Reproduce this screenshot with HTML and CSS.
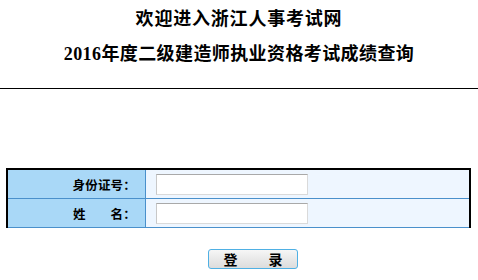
FILE: index.html
```html
<!DOCTYPE html>
<html lang="zh-CN">
<head>
<meta charset="utf-8">
<title>成绩查询</title>
<link rel="stylesheet" href="styles.css">
</head>
<body>
<div class="header">
  <div class="title1">欢迎进入浙江人事考试网</div>
  <div class="title2">2016年度二级建造师执业资格考试成绩查询</div>
</div>
<div class="rule"></div>
<div class="form">
  <div class="row">
    <div class="label">身份证号：</div>
    <div class="field"><input class="inp" type="text"></div>
  </div>
  <div class="row">
    <div class="label">姓<span class="gap"></span>名：</div>
    <div class="field"><input class="inp" type="text"></div>
  </div>
</div>
<div class="actions">
  <button class="btn" type="button">登<span class="bgap"></span>录</button>
</div>
</body>
</html>
```

FILE: styles.css
```css
html, body {
  margin: 0;
  padding: 0;
  background: #ffffff;
}
body {
  width: 478px;
  height: 280px;
  overflow: hidden;
  font-family: "Noto Sans CJK SC", "Liberation Serif", serif;
  color: #000;
}
.header {
  display: flex;
  flex-direction: column;
  align-items: center;
  padding-top: 6px;
}
.title1 {
  font-size: 18px;
  font-weight: bold;
  line-height: 22px;
  height: 22px;
  letter-spacing: 0.8px;
  font-family: "Noto Sans CJK SC", serif;
}
.title2 {
  margin-top: 15px;
  font-size: 18px;
  font-weight: bold;
  line-height: 22px;
  height: 22px;
  letter-spacing: 0.4px;
  font-family: "Liberation Serif", "Noto Sans CJK SC", serif;
}
.rule {
  margin-top: 23px;
  height: 1px;
  background: #000;
}
.form {
  margin-top: 79px;
  margin-left: 6px;
  width: 461px;
  border-top: 2px solid #000;
  border-left: 2px solid #000;
  border-right: 2px solid #000;
}
.row {
  display: flex;
  height: 29px;
  border-bottom: 1px solid #4a90cb;
  box-sizing: border-box;
}
.label {
  width: 138px;
  box-sizing: border-box;
  background: #a9d8f7;
  border-right: 1px solid #4a90cb;
  display: flex;
  align-items: center;
  justify-content: flex-end;
  padding-right: 9px;
  font-size: 12.5px;
  font-weight: bold;
  letter-spacing: 0.2px;
}
.gap {
  display: inline-block;
  width: 25px;
}
.field {
  flex: 1;
  background: #eef6ff;
  display: flex;
  align-items: center;
  padding-left: 10px;
}
.inp {
  width: 152px;
  height: 21px;
  box-sizing: border-box;
  margin: 0;
  padding: 0 3px;
  background: #fff;
  border: 1px solid #dadada;
  border-top-color: #a9a9a9;
  border-left-color: #c8c8c8;
  outline: none;
}
.actions {
  display: flex;
  padding-left: 208px;
  margin-top: 21px;
}
.btn {
  width: 90px;
  height: 20px;
  box-sizing: border-box;
  margin: 0;
  padding: 0;
  border: 1px solid #4fb0e4;
  border-radius: 3px;
  background: linear-gradient(#f6f6f6, #dcdcdc);
  font-family: "Noto Sans CJK SC", sans-serif;
  font-size: 14px;
  font-weight: bold;
  line-height: 18px;
  color: #000;
  display: flex;
  align-items: center;
  justify-content: center;
}
.bgap {
  display: inline-block;
  width: 31px;
}
```
